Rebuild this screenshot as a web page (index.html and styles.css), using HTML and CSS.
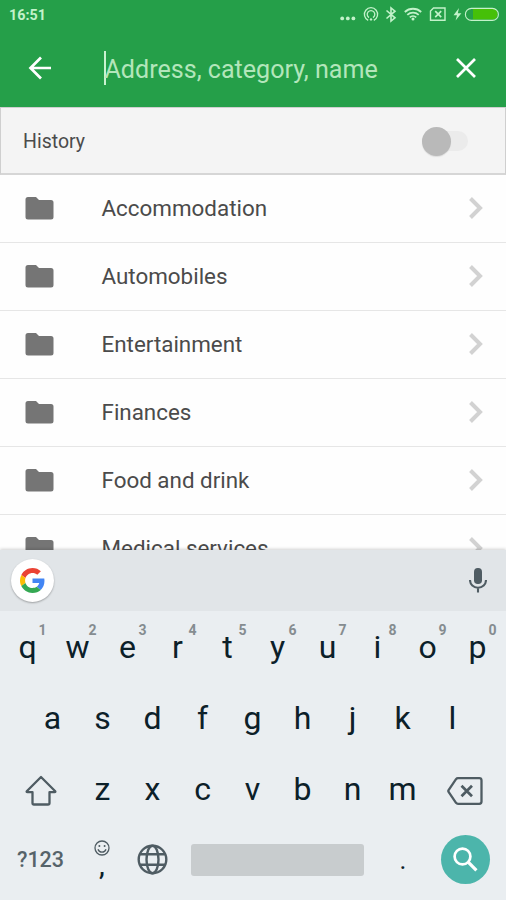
FILE: index.html
```html
<!DOCTYPE html>
<html lang="en">
<head>
<meta charset="utf-8">
<title>Search</title>
<link rel="stylesheet" href="styles.css">
</head>
<body>
<svg width="0" height="0" class="defs">
  <symbol id="folder" viewBox="0 0 28 23"><path d="M2.5 0H10.5L13.5 3H25.5Q28 3 28 5.5V20Q28 22.5 25.5 22.5H2.5Q0 22.5 0 20V2.5Q0 0 2.5 0Z" fill="#757575"/></symbol>
  <symbol id="chevron" viewBox="0 0 14 22"><path d="M1.5 1.5L11 11L1.5 20.5" fill="none" stroke="#d2d2d2" stroke-width="4"/></symbol>
</svg>
<div class="screen">
  <header class="top">
    <div class="status">
      <span class="clock">16:51</span>
      <svg class="tray" width="166" height="28" viewBox="340 0 166 28" fill="none" stroke="#c3f2ca" stroke-width="1.3">
        <g fill="#c3f2ca" stroke="none"><circle cx="342.2" cy="18.4" r="1.9"/><circle cx="347.8" cy="18.4" r="1.9"/><circle cx="353.4" cy="18.4" r="1.9"/></g>
        <path d="M368.2 20.3A6.6 6.6 0 1 1 373.8 20.3M369 17.6A3.8 3.8 0 1 1 373 17.6"/>
        <circle cx="371" cy="19.4" r="1.2" fill="#c3f2ca" stroke="none"/>
        <path d="M386.5 10.5L395 17.8L391 21V8L395 11.2L386.5 18.5" stroke-width="1.6"/>
        <path d="M404.8 12A12 12 0 0 1 421.2 12M407.3 14.8A8.4 8.4 0 0 1 418.7 14.8M409.8 17.3A4.7 4.7 0 0 1 416.2 17.3" stroke-width="1.8"/><circle cx="413" cy="19" r="1.5" fill="#c3f2ca" stroke="none"/>
        <path d="M433.5 8H445V20.3H430.5V11Z" stroke-width="1.4"/><path d="M435.2 11.2L441.2 17.2M441.2 11.2L435.2 17.2" stroke-width="1.7"/>
        <path d="M459 8L453.5 15.2H457L455.6 20.6L461.4 13.2H457.8Z" fill="#c3f2ca" stroke="none"/>
        <path d="M473 8.8H493Q497.6 9.3 497.6 14T493 19.6H473Z" fill="#46c008" stroke="none"/>
        <rect x="465.4" y="8.4" width="33" height="12" rx="6" stroke-width="1.1"/>
      </svg>
    </div>
    <div class="searchbar">
      <svg class="back" width="24" height="24" viewBox="0 0 24 24" fill="none" stroke="#fff" stroke-width="2.7"><path d="M13 1.5L2.5 12L13 22.5M2.5 12H23"/></svg>
      <div class="field"><span class="hint">Address, category, name</span></div>
      <svg class="clear" width="20" height="20" viewBox="0 0 20 20" stroke="#fff" stroke-width="2.7"><path d="M1 1L19 19M19 1L1 19"/></svg>
    </div>
  </header>
  <section class="history"><span>History</span><span class="switch"><span class="track"></span><span class="thumb"></span></span></section>
  <ul class="list">
    <li><svg class="folder"><use href="#folder"/></svg><span>Accommodation</span><svg class="chev"><use href="#chevron"/></svg></li>
    <li><svg class="folder"><use href="#folder"/></svg><span>Automobiles</span><svg class="chev"><use href="#chevron"/></svg></li>
    <li><svg class="folder"><use href="#folder"/></svg><span>Entertainment</span><svg class="chev"><use href="#chevron"/></svg></li>
    <li><svg class="folder"><use href="#folder"/></svg><span>Finances</span><svg class="chev"><use href="#chevron"/></svg></li>
    <li><svg class="folder"><use href="#folder"/></svg><span>Food and drink</span><svg class="chev"><use href="#chevron"/></svg></li>
    <li><svg class="folder"><use href="#folder"/></svg><span>Medical services</span><svg class="chev"><use href="#chevron"/></svg></li>
  </ul>
  <section class="keyboard">
    <div class="strip">
      <span class="google"><svg width="25" height="25" viewBox="0 0 48 48">
        <path fill="#ea4335" d="M24 9.5c3.54 0 6.71 1.22 9.21 3.6l6.85-6.85C35.9 2.38 30.47 0 24 0 14.62 0 6.51 5.38 2.56 13.22l7.98 6.19C12.43 13.72 17.74 9.5 24 9.5z"/>
        <path fill="#4285f4" d="M46.98 24.55c0-1.57-.15-3.09-.38-4.55H24v9.02h12.94c-.58 2.96-2.26 5.48-4.78 7.18l7.73 6c4.51-4.18 7.09-10.36 7.09-17.65z"/>
        <path fill="#fbbc05" d="M10.53 28.59c-.48-1.45-.76-2.99-.76-4.59s.27-3.14.76-4.59l-7.98-6.19C.92 16.46 0 20.12 0 24c0 3.88.92 7.54 2.56 10.78l7.97-6.19z"/>
        <path fill="#34a853" d="M24 48c6.48 0 11.93-2.13 15.89-5.81l-7.73-6c-2.15 1.45-4.92 2.3-8.16 2.3-6.26 0-11.57-4.22-13.47-9.91l-7.98 6.19C6.51 42.62 14.62 48 24 48z"/>
      </svg></span>
      <svg width="18" height="25" viewBox="0 0 18 25"><rect x="5" y="0" width="8" height="16" rx="3.8" fill="#4f5c63"/><path d="M1 12C1 16.5 4.5 19.7 9 19.7S17 16.5 17 12M9 19.5V24.5" fill="none" stroke="#4f5c63" stroke-width="2.1"/></svg>
    </div>
    <div class="row">
      <span class="key">q<sup>1</sup></span><span class="key">w<sup>2</sup></span><span class="key">e<sup>3</sup></span><span class="key">r<sup>4</sup></span><span class="key">t<sup>5</sup></span><span class="key">y<sup>6</sup></span><span class="key">u<sup>7</sup></span><span class="key">i<sup>8</sup></span><span class="key">o<sup>9</sup></span><span class="key">p<sup>0</sup></span>
    </div>
    <div class="row">
      <span class="key">a</span><span class="key">s</span><span class="key">d</span><span class="key">f</span><span class="key">g</span><span class="key">h</span><span class="key">j</span><span class="key">k</span><span class="key">l</span>
    </div>
    <div class="row">
      <span class="key wide shift"><svg width="32" height="31" viewBox="0 0 32 31"><path d="M16 2L30 16Q31 17.2 29.5 17.2H24.5V28Q24.5 29.5 23 29.5H9Q7.5 29.5 7.5 28V17.2H2.5Q1 17.2 2 16Z" fill="none" stroke="#4f5c63" stroke-width="2.3" stroke-linejoin="round"/></svg></span>
      <span class="key">z</span><span class="key">x</span><span class="key">c</span><span class="key">v</span><span class="key">b</span><span class="key">n</span><span class="key">m</span>
      <span class="key wide erase"><svg width="36" height="28" viewBox="0 0 36 28" fill="none" stroke="#4f5c63" stroke-width="2.3"><path d="M11 1.2H32.3Q34.5 1.2 34.5 3.4V24.6Q34.5 26.8 32.3 26.8H11Q9.8 26.8 9 25.8L1.6 15Q1 14 1.6 13L9 2.2Q9.8 1.2 11 1.2Z"/><path d="M14.5 8.7L25 19.3M25 8.7L14.5 19.3" stroke-width="2.7"/></svg></span>
    </div>
    <div class="row bottom">
      <span class="symbols">?123</span>
      <span class="key comma"><svg width="16" height="16" viewBox="0 0 16 16" fill="none" stroke="#4f5c63" stroke-width="1.3"><circle cx="8" cy="8" r="7"/><path d="M4 9.3A4.2 4.2 0 0 0 12 9.3"/><g fill="#4f5c63" stroke="none"><circle cx="5.4" cy="6" r="1"/><circle cx="10.6" cy="6" r="1"/></g></svg><span>,</span></span>
      <span class="key"><svg width="31" height="31" viewBox="0 0 31 31" fill="none" stroke="#4f5c63" stroke-width="2.4"><circle cx="15.5" cy="15.5" r="13.8"/><ellipse cx="15.5" cy="15.5" rx="6" ry="13.8"/><path d="M3 10.3H28M3 20.7H28"/></svg></span>
      <span class="space"></span>
      <span class="key dot">.</span>
      <span class="go"><svg width="25" height="25" viewBox="0 0 25 25" fill="none" stroke="#fff"><circle cx="9.5" cy="9.5" r="7.9" stroke-width="2.7"/><path d="M15.2 15.2L23.4 23.4" stroke-width="3.3"/></svg></span>
    </div>
  </section>
</div>
</body>
</html>
```

FILE: styles.css
```css
* { box-sizing: border-box; }
body { margin: 0; font-family: Roboto, sans-serif; }
svg { display: block; flex: none; }
.defs { position: absolute; }
.screen { width: 506px; height: 900px; display: flex; flex-direction: column; overflow: hidden; background: #fefefe; }

.top { flex: none; height: 107px; background: #259f49; }
.status { display: flex; justify-content: space-between; align-items: center; height: 29px; padding-left: 9px; }
.tray { margin-bottom: 1px; }
.clock { font-size: 14.3px; font-weight: 700; color: #c3f2ca; }
.searchbar { display: flex; align-items: center; height: 78px; padding: 0 30px 0 28px; }
.field { flex: 1; height: 34px; margin-left: 52px; border-left: 2px solid #c9f2d0; display: flex; align-items: center; }
.hint { font-size: 25.1px; color: #b3e6bb; white-space: nowrap; margin: 2px 0 0 -1.5px; }

.history { flex: none; height: 68px; display: flex; align-items: center; justify-content: space-between; padding: 1px 37px 0 22px; background: #f4f4f4; border: 1px solid #cfcfcf; border-bottom: 2px solid #d6d6d6; font-size: 19.5px; color: #4b4b4b; }
.switch { display: flex; align-items: center; width: 46px; height: 30px; }
.track { width: 36px; height: 20px; margin-left: 10px; border-radius: 10px; background: #ebebeb; }
.thumb { width: 29px; height: 29px; margin-left: -46px; border-radius: 50%; background: #b9b9b9; box-shadow: 0 1px 1px #ddd; }

.list { flex: 1; min-height: 0; overflow: hidden; margin: 0; padding: 0; list-style: none; }
.list li { display: flex; align-items: center; height: 68px; padding: 0 23px 1px 25px; border-bottom: 1px solid #e6e6e6; font-size: 22.4px; color: #4b4b4b; }
.list span { flex: 1; margin-left: 47.5px; }
.folder { width: 29px; height: 23px; }
.chev { width: 14px; height: 22px; }

.keyboard { flex: none; height: 350px; background: #eaeef1; box-shadow: 0 -1px 3px rgba(0,0,0,.18); position: relative; }
.strip { height: 61px; display: flex; align-items: center; justify-content: space-between; padding: 0 19px 0 11px; background: #e1e5e8; }
.google { display: flex; align-items: center; justify-content: center; width: 43px; height: 43px; border-radius: 50%; background: #fff; box-shadow: 0 1px 2px rgba(0,0,0,.3); }
.row { display: flex; justify-content: center; align-items: center; height: 71px; padding-right: 1px; }
.key { position: relative; display: flex; align-items: center; justify-content: center; width: 50px; height: 71px; font-size: 32px; color: #0c2029; }
.key sup { position: absolute; left: 36px; top: 10px; font-size: 14px; line-height: 18px; font-weight: 700; color: #858c90; }
.wide { width: 75px; }
.shift { padding: 3px 0 0 1px; }
.erase { padding-top: 4px; }
.bottom { padding-right: 2px; }
.symbols { width: 77px; padding-left: 4px; text-align: center; font-size: 21.5px; font-weight: 500; color: #56636a; }
.comma { flex-direction: column; padding-bottom: 3px; }
.comma span { font-size: 26px; line-height: 20px; font-weight: 500; }
.space { width: 173px; height: 32px; margin: 0 14px; border-radius: 3px; background: #c8ccce; }
.dot { font-size: 26px; }
.go { display: flex; align-items: center; justify-content: center; width: 49px; height: 49px; margin: 0 14px 0 13px; padding: 0 1px 1px 0; border-radius: 50%; background: #4cb5ab; }
```
